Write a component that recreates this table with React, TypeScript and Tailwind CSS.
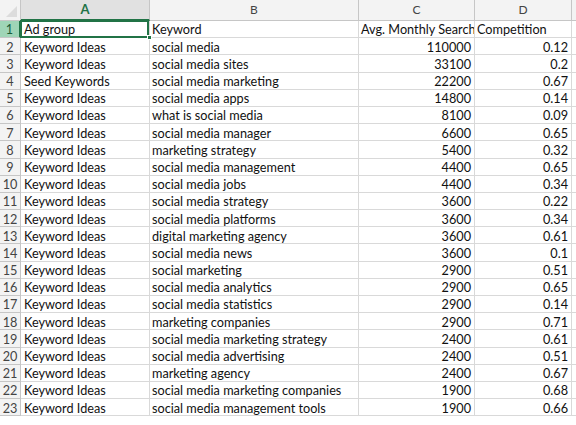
const ROWS: [string, string, number, number][] = [
  ["Keyword Ideas", "social media", 110000, 0.12],
  ["Keyword Ideas", "social media sites", 33100, 0.2],
  ["Seed Keywords", "social media marketing", 22200, 0.67],
  ["Keyword Ideas", "social media apps", 14800, 0.14],
  ["Keyword Ideas", "what is social media", 8100, 0.09],
  ["Keyword Ideas", "social media manager", 6600, 0.65],
  ["Keyword Ideas", "marketing strategy", 5400, 0.32],
  ["Keyword Ideas", "social media management", 4400, 0.65],
  ["Keyword Ideas", "social media jobs", 4400, 0.34],
  ["Keyword Ideas", "social media strategy", 3600, 0.22],
  ["Keyword Ideas", "social media platforms", 3600, 0.34],
  ["Keyword Ideas", "digital marketing agency", 3600, 0.61],
  ["Keyword Ideas", "social media news", 3600, 0.1],
  ["Keyword Ideas", "social marketing", 2900, 0.51],
  ["Keyword Ideas", "social media analytics", 2900, 0.65],
  ["Keyword Ideas", "social media statistics", 2900, 0.14],
  ["Keyword Ideas", "marketing companies", 2900, 0.71],
  ["Keyword Ideas", "social media marketing strategy", 2400, 0.61],
  ["Keyword Ideas", "social media advertising", 2400, 0.51],
  ["Keyword Ideas", "marketing agency", 2400, 0.67],
  ["Keyword Ideas", "social media marketing companies", 1900, 0.68],
  ["Keyword Ideas", "social media management tools", 1900, 0.66],
];

const cell = "h-[17.2px] border-r border-b border-[#d9d9d9] flex items-end pb-[1px] overflow-hidden whitespace-nowrap";
const rowHead = "h-[17.2px] border-r border-b border-[#c6c6c6] bg-[#f3f3f3] text-[#444] flex items-end justify-center pb-[1px]";

function Row({ n, cells }: { n: number; cells: [string, string, number, number] }) {
  return (
    <>
      <div className={rowHead}>{n}</div>
      <div className={`${cell} pl-[3px]`}>{cells[0]}</div>
      <div className={`${cell} pl-[2px]`}>{cells[1]}</div>
      <div className={`${cell} justify-end pr-[3px]`}>{cells[2]}</div>
      <div className={`${cell} justify-end pr-[3px]`}>{cells[3]}</div>
      <div className={cell}></div>
    </>
  );
}

export default function App() {
  return (
    <div className="w-[576px] h-[425px] overflow-hidden bg-white text-[12.7px] text-[#111] font-['Lato','Open_Sans',sans-serif] leading-none">
      <div className="grid grid-cols-[21px_129px_209px_116px_97px_30px]">
        {/* column headers */}
        <div className="h-[21px] relative bg-[#f3f3f3] border-r border-b border-[#c6c6c6]">
          <div className="absolute right-[3px] bottom-[3px] w-0 h-0 border-l-[11px] border-l-transparent border-b-[11px] border-b-[#dcdcdc]" />
        </div>
        <div className="h-[21px] bg-[#e1e1e1] border-r border-[#c6c6c6] border-b-2 border-b-[#217346] flex items-center justify-center font-bold text-[#217346] text-[13px]">A</div>
        {["B", "C", "D", ""].map(h => (
          <div key={h} className="h-[21px] bg-[#f3f3f3] border-r border-b border-[#c6c6c6] flex items-center justify-center text-[#444] text-[12px]">{h}</div>
        ))}

        {/* row 1 */}
        <div className="h-[17.2px] bg-[#9fd5b7] border-r-2 border-r-[#217346] border-b border-b-[#c6c6c6] text-[#1d5f3a] flex items-end justify-center pb-[1px]">1</div>
        <div className={`${cell} pl-[3px] relative overflow-visible`}>
          Ad group
          <div className="absolute -left-[1px] -top-[1px] right-0 -bottom-[1px] border-2 border-[#217346]" />
          <div className="absolute -right-[3px] -bottom-[3px] w-[5px] h-[5px] bg-[#217346] border border-white" />
        </div>
        <div className={`${cell} pl-[2px]`}>Keyword</div>
        <div className={`${cell} pl-[2px]`}>Avg. Monthly Searches</div>
        <div className={`${cell} pl-[2px]`}>Competition</div>
        <div className={cell}></div>

        {ROWS.map((r, i) => <Row key={i} n={i + 2} cells={r} />)}
      </div>
    </div>
  );
}
